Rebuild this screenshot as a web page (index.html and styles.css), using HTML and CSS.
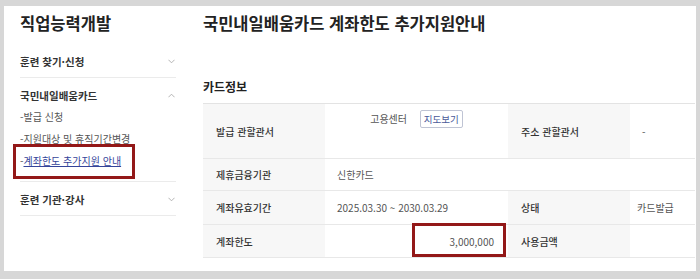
FILE: index.html
```html
<!DOCTYPE html>
<html lang="ko">
<head>
    <meta charset="UTF-8">
    <meta name="viewport" content="width=device-width, initial-scale=1.0">
    <title>국민내일배움카드 계좌한도 추가지원안내</title>
    <link rel="stylesheet" href="styles.css">
</head>
<body>
    <div class="panel">
        <aside class="sidebar">
            <h2 class="side-title">직업능력개발</h2>
            <div class="group">
                <div class="group-head">
                    <span>훈련 찾기·신청</span>
                    <svg class="chevron" viewBox="0 0 8 5"><path d="M0.5 0.5 L4 4 L7.5 0.5" /></svg>
                </div>
            </div>
            <div class="group open">
                <div class="group-head">
                    <span>국민내일배움카드</span>
                    <svg class="chevron" viewBox="0 0 8 5"><path d="M0.5 4.5 L4 1 L7.5 4.5" /></svg>
                </div>
                <ul class="sub-menu">
                    <li>-발급 신청</li>
                    <li>-지원대상 및 휴직기간변경</li>
                    <li class="current"><span class="marked">-<a href="#">계좌한도 추가지원 안내</a></span></li>
                </ul>
            </div>
            <div class="group">
                <div class="group-head">
                    <span>훈련 기관·강사</span>
                    <svg class="chevron" viewBox="0 0 8 5"><path d="M0.5 0.5 L4 4 L7.5 0.5" /></svg>
                </div>
            </div>
        </aside>

        <main class="content">
            <h1 class="page-title">국민내일배움카드 계좌한도 추가지원안내</h1>
            <h3 class="section-title">카드정보</h3>
            <table class="info-table">
                <colgroup>
                    <col class="col-label">
                    <col class="col-value">
                    <col class="col-label">
                    <col class="col-value-sm">
                </colgroup>
                <tr class="row-tall">
                    <th>발급 관할관서</th>
                    <td class="center-top">고용센터 <button class="map-btn">지도보기</button></td>
                    <th>주소 관할관서</th>
                    <td>-</td>
                </tr>
                <tr class="row-2">
                    <th>제휴금융기관</th>
                    <td colspan="3">신한카드</td>
                </tr>
                <tr class="row-3">
                    <th>계좌유효기간</th>
                    <td>2025.03.30 ~ 2030.03.29</td>
                    <th>상태</th>
                    <td class="tight">카드발급</td>
                </tr>
                <tr class="row-4">
                    <th>계좌한도</th>
                    <td class="amount"><span class="amount-box"></span>3,000,000</td>
                    <th>사용금액</th>
                    <td></td>
                </tr>
            </table>
        </main>
    </div>
</body>
</html>
```

FILE: styles.css
```css
* {
    box-sizing: border-box;
    margin: 0;
    padding: 0;
}
body {
    font-family: "Noto Sans CJK KR", "Noto Sans", sans-serif;
    background-color: #d7d7d7;
    padding: 6px 4px 0 4px;
    color: #222;
}
.panel {
    display: flex;
    width: 692px;
    height: 265px;
    background-color: #fff;
}

/* sidebar */
.sidebar {
    width: 180px;
    padding: 0 8px 0 16px;
}
.side-title {
    font-size: 16.5px;
    font-weight: 700;
    line-height: 25px;
    margin-top: 5px;
    margin-bottom: 8px;
    color: #222;
}
.group {
    border-bottom: 1px solid #ebebeb;
}
.group-head {
    display: flex;
    justify-content: space-between;
    align-items: center;
    height: 33px;
    padding-top: 1px;
    font-size: 10.5px;
    font-weight: 700;
    color: #333;
}
.group.open .group-head {
    height: 28px;
    padding-top: 6px;
}
.chevron {
    width: 7px;
    height: 5px;
    margin-right: 1px;
    fill: none;
    stroke: #aaa;
    stroke-width: 1;
}
.sub-menu {
    list-style: none;
    padding-bottom: 9px;
}
.sub-menu li {
    font-size: 10px;
    line-height: 22px;
    color: #555;
}
.sub-menu a {
    color: #34449a;
    text-decoration: underline;
}
.marked {
    position: relative;
    display: inline-block;
}
.marked::after {
    content: "";
    position: absolute;
    left: -7px;
    top: -6px;
    right: -14px;
    bottom: -7px;
    border: 3px solid #931818;
}

/* content */
.content {
    flex: 1;
    padding: 0 1px 0 19px;
}
.page-title {
    font-size: 16.5px;
    font-weight: 700;
    line-height: 25px;
    margin-top: 5px;
    color: #222;
}
.section-title {
    font-size: 12px;
    font-weight: 700;
    line-height: 20px;
    margin-top: 41px;
    margin-bottom: 6px;
    color: #222;
}
.info-table {
    width: 492px;
    border-collapse: collapse;
    table-layout: fixed;
    font-size: 10px;
    border-top: 1px solid #e3e3e3;
}
.col-label {
    width: 122px;
}
.col-value {
    width: 183px;
}
.col-value-sm {
    width: 65px;
}
.info-table tr {
    border-bottom: 1px solid #e8e8e8;
}
.info-table th {
    background-color: #f7f7f7;
    text-align: left;
    font-weight: 500;
    color: #333;
    padding: 0 13px;
}
.info-table td {
    color: #555;
    padding: 0 12px;
}
.info-table td.tight {
    padding-left: 7px;
}
.row-tall {
    height: 55px;
}
.row-2 {
    height: 32px;
}
.row-3 {
    height: 34px;
}
.row-4 {
    height: 33px;
}
.center-top {
    vertical-align: top;
    text-align: center;
    padding-top: 6px !important;
}
.map-btn {
    font-family: inherit;
    font-size: 9.5px;
    color: #4a5a9a;
    background-color: #fff;
    border: 1px solid #bfc4d4;
    border-radius: 2px;
    padding: 1px 3px;
    margin-left: 10px;
}
.amount {
    position: relative;
    text-align: right;
    padding-right: 14px !important;
}
.amount-box {
    position: absolute;
    left: 87px;
    right: 2px;
    top: -2px;
    bottom: 0;
    border: 3px solid #931818;
}
```
